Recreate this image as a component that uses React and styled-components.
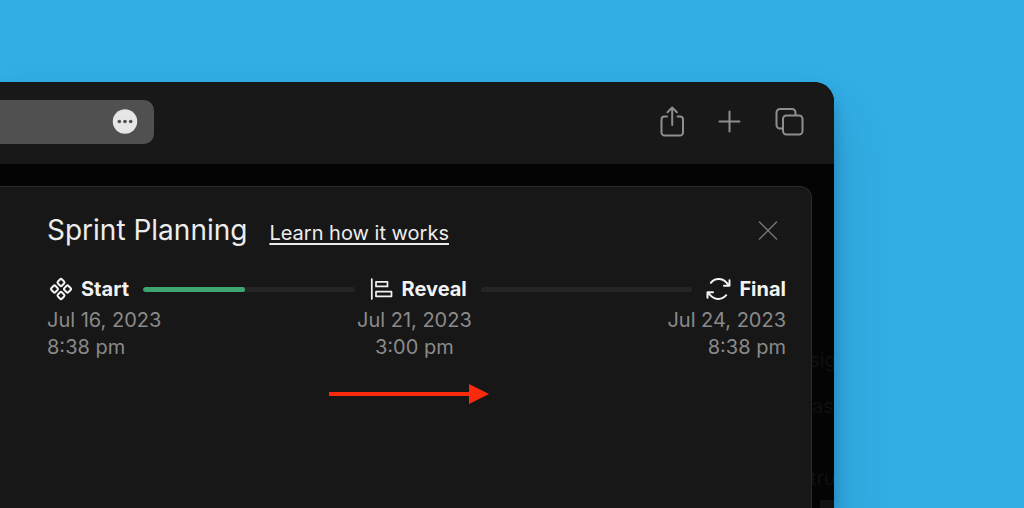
import React from "react";
import styled, { createGlobalStyle } from "styled-components";

const GlobalStyle = createGlobalStyle`
  * { box-sizing: border-box; }
  body {
    margin: 0;
    background: #32aee5;
    font-family: Inter, "Liberation Sans", sans-serif;
  }
`;

const Desktop = styled.div`
  display: flex;
  min-height: 100vh;
  padding: 82px 190px 0 0;
  overflow: hidden;
`;

const BrowserWindow = styled.div`
  flex: 1;
  display: flex;
  flex-direction: column;
  background: #040404;
  border-top-right-radius: 20px;
  box-shadow: 0 36px 60px rgba(10, 30, 60, 0.16), 0 12px 16px rgba(10, 30, 60, 0.26);
  overflow: hidden;
`;

const Toolbar = styled.header`
  display: flex;
  align-items: center;
  justify-content: space-between;
  height: 82px;
  padding: 0 29px 2px 0;
  background: #181818;
`;

const AddressBar = styled.div`
  display: flex;
  align-items: center;
  justify-content: flex-end;
  width: 154px;
  height: 44px;
  padding-right: 16px;
  border-radius: 0 10px 10px 0;
  background: #505050;
`;

const IconButton = styled.button`
  display: flex;
  padding: 0;
  border: 0;
  background: none;
  color: ${(p) => p.$color || "#8e8e8e"};
  cursor: pointer;
`;

const Actions = styled.div`
  display: flex;
  align-items: center;
  gap: 28px;
`;

const Viewport = styled.div`
  flex: 1;
  display: flex;
  padding-top: 22px;
`;

const Panel = styled.section`
  flex: 1;
  padding: 23px 25px 24px 47px;
  border: solid #2b2b2b;
  border-width: 1px 1px 0 0;
  border-top-right-radius: 12px;
  background: #171717;
`;

const Backdrop = styled.aside`
  width: 22px;
  padding-top: 160px;
  overflow: hidden;
  color: #0f0f0f;
  font-size: 20px;
  line-height: 28px;
`;

const BackdropLine = styled.div`
  display: flex;
  justify-content: center;
  white-space: nowrap;
  margin-bottom: ${(p) => p.$space}px;
`;

const BackdropBlock = styled.div`
  height: 12px;
  margin-left: 8px;
  background: #121212;
`;

const PanelHeader = styled.div`
  display: flex;
  align-items: center;
  justify-content: space-between;
  height: 40px;
  padding-right: 8px;
`;

const Heading = styled.div`
  display: flex;
  align-items: baseline;
  gap: 22px;
`;

const Title = styled.h1`
  margin: 0;
  color: #ececec;
  font-size: 28px;
  line-height: 40px;
  font-weight: 400;
`;

const HelpLink = styled.a`
  color: #ececec;
  font-size: 20px;
  line-height: 28px;
  text-decoration: underline;
  text-decoration-thickness: 2px;
  text-underline-offset: 3px;
`;

const Track = styled.div`
  display: flex;
  align-items: center;
  gap: 14px;
  height: 28px;
  margin-top: 25px;
`;

const Stage = styled.div`
  display: flex;
  align-items: center;
  gap: 8px;
  color: #f2f2f2;
  font-size: 20px;
  line-height: 28px;
  font-weight: 700;
`;

const Bar = styled.div`
  flex: 1;
  height: 5px;
  border-radius: 3px;
  background: #252525;
  overflow: hidden;
`;

const BarFill = styled.div`
  height: 100%;
  border-radius: 3px;
  background: #3da56f;
`;

const Dates = styled.div`
  display: flex;
  justify-content: space-between;
  margin-top: 4px;
`;

const StageDate = styled.time`
  color: #8a8a8a;
  font-size: 20px;
  line-height: 27px;
  text-align: ${(p) => p.$align};
`;

const ArrowRow = styled.div`
  display: flex;
  padding-left: 282px;
  margin-top: 22px;
`;

const iconProps = {
  fill: "none",
  stroke: "currentColor",
  strokeWidth: 2,
  strokeLinecap: "round",
  strokeLinejoin: "round",
  "aria-hidden": true,
};

const MoreIcon = () => (
  <svg width="26" height="26" viewBox="0 0 26 26" aria-hidden="true">
    <circle cx="13" cy="12.500" r="12.200" fill="#e6e6e6" />
    <g fill="#505050">
      <circle cx="7.300" cy="12.500" r="1.800" />
      <circle cx="13" cy="12.500" r="1.800" />
      <circle cx="18.700" cy="12.500" r="1.800" />
    </g>
  </svg>
);

const ShareIcon = () => (
  <svg width="32" height="32" viewBox="0 0 32 32" {...iconProps}>
    <path d="M14 10.500h-2.500a3 3 0 0 0-3 3v13a3 3 0 0 0 3 3H27a3 3 0 0 0 3-3v-13a3 3 0 0 0-3-3h-2.500M19.200 19V1.700M14.500 6.200l4.700-4.700 4.700 4.700" />
  </svg>
);

const PlusIcon = () => (
  <svg width="32" height="32" viewBox="0 0 32 32" {...iconProps}>
    <path d="M16.500 5.500v20M6.500 15.500h20" />
  </svg>
);

const TabsIcon = () => (
  <svg width="32" height="32" viewBox="0 0 32 32" {...iconProps}>
    <rect x="10" y="9.500" width="19.500" height="19" rx="3.500" />
    <path d="M9.500 22.500H7a3.500 3.500 0 0 1-3.500-3.500V6.500a3.500 3.500 0 0 1 3.500-3.500H19a3.500 3.500 0 0 1 3.500 3.500V9" />
  </svg>
);

const CloseIcon = () => (
  <svg width="22" height="22" viewBox="0 0 22 22" {...iconProps} strokeWidth="1.500">
    <path d="M3.500 3l17 17M20.500 3l-17 17" />
  </svg>
);

const ComponentsIcon = () => (
  <svg width="26" height="26" viewBox="0 0 26 26" {...iconProps}>
    <g transform="rotate(45 14 13)">
      <rect x="6.500" y="5.500" width="5.800" height="5.800" rx="1.500" />
      <rect x="15.700" y="5.500" width="5.800" height="5.800" rx="1.500" />
      <rect x="6.500" y="14.700" width="5.800" height="5.800" rx="1.500" />
      <rect x="15.700" y="14.700" width="5.800" height="5.800" rx="1.500" />
    </g>
  </svg>
);

const AlignLeftIcon = () => (
  <svg width="25" height="26" viewBox="0 0 25 26" {...iconProps} strokeWidth="1.700">
    <path d="M2.800 3v20" />
    <rect x="7" y="5.800" width="11.500" height="4.600" />
    <rect x="7" y="15.700" width="15.500" height="4.600" />
  </svg>
);

const CycleIcon = () => (
  <svg width="25" height="26" viewBox="0 0 25 26" {...iconProps}>
    <path d="M4.800 6.800C9.500 1.300 17.500 1.800 22.300 8.800M23.500 4.200v5.500h-5.500M20.200 19.200C15.500 24.700 7.500 24.200 2.700 17.200M1.500 21.800v-5.500h5.500" />
  </svg>
);

const ArrowIcon = () => (
  <svg width="160" height="22" viewBox="0 0 160 22" fill="#fc2a0d" aria-hidden="true">
    <rect x="0" y="9" width="144" height="4" />
    <path d="M140 1l20 10-20 10z" />
  </svg>
);

function Segment({ progress }) {
  return (
    <Bar role="progressbar" aria-valuenow={progress} aria-valuemin={0} aria-valuemax={100}>
      {progress > 0 && <BarFill style={{ width: `${progress}%` }} />}
    </Bar>
  );
}

export default function App() {
  return (
    <>
      <GlobalStyle />
      <Desktop>
        <BrowserWindow>
          <Toolbar>
            <AddressBar>
              <IconButton aria-label="More"><MoreIcon /></IconButton>
            </AddressBar>
            <Actions>
              <IconButton aria-label="Share"><ShareIcon /></IconButton>
              <IconButton aria-label="New tab"><PlusIcon /></IconButton>
              <IconButton aria-label="Show tabs"><TabsIcon /></IconButton>
            </Actions>
          </Toolbar>
          <Viewport>
            <Panel>
              <PanelHeader>
                <Heading>
                  <Title>Sprint Planning</Title>
                  <HelpLink href="#how-it-works">Learn how it works</HelpLink>
                </Heading>
                <IconButton $color="#747474" aria-label="Close"><CloseIcon /></IconButton>
              </PanelHeader>
              <Track>
                <Stage><ComponentsIcon />Start</Stage>
                <Segment progress={48} />
                <Stage><AlignLeftIcon />Reveal</Stage>
                <Segment progress={0} />
                <Stage><CycleIcon />Final</Stage>
              </Track>
              <Dates>
                <StageDate $align="left">Jul 16, 2023<br />8:38 pm</StageDate>
                <StageDate $align="center">Jul 21, 2023<br />3:00 pm</StageDate>
                <StageDate $align="right">Jul 24, 2023<br />8:38 pm</StageDate>
              </Dates>
              <ArrowRow><ArrowIcon /></ArrowRow>
            </Panel>
            <Backdrop aria-hidden="true">
              <BackdropLine $space={18}>sig</BackdropLine>
              <BackdropLine $space={44}>as</BackdropLine>
              <BackdropLine $space={8}>tru</BackdropLine>
              <BackdropBlock />
            </Backdrop>
          </Viewport>
        </BrowserWindow>
      </Desktop>
    </>
  );
}
